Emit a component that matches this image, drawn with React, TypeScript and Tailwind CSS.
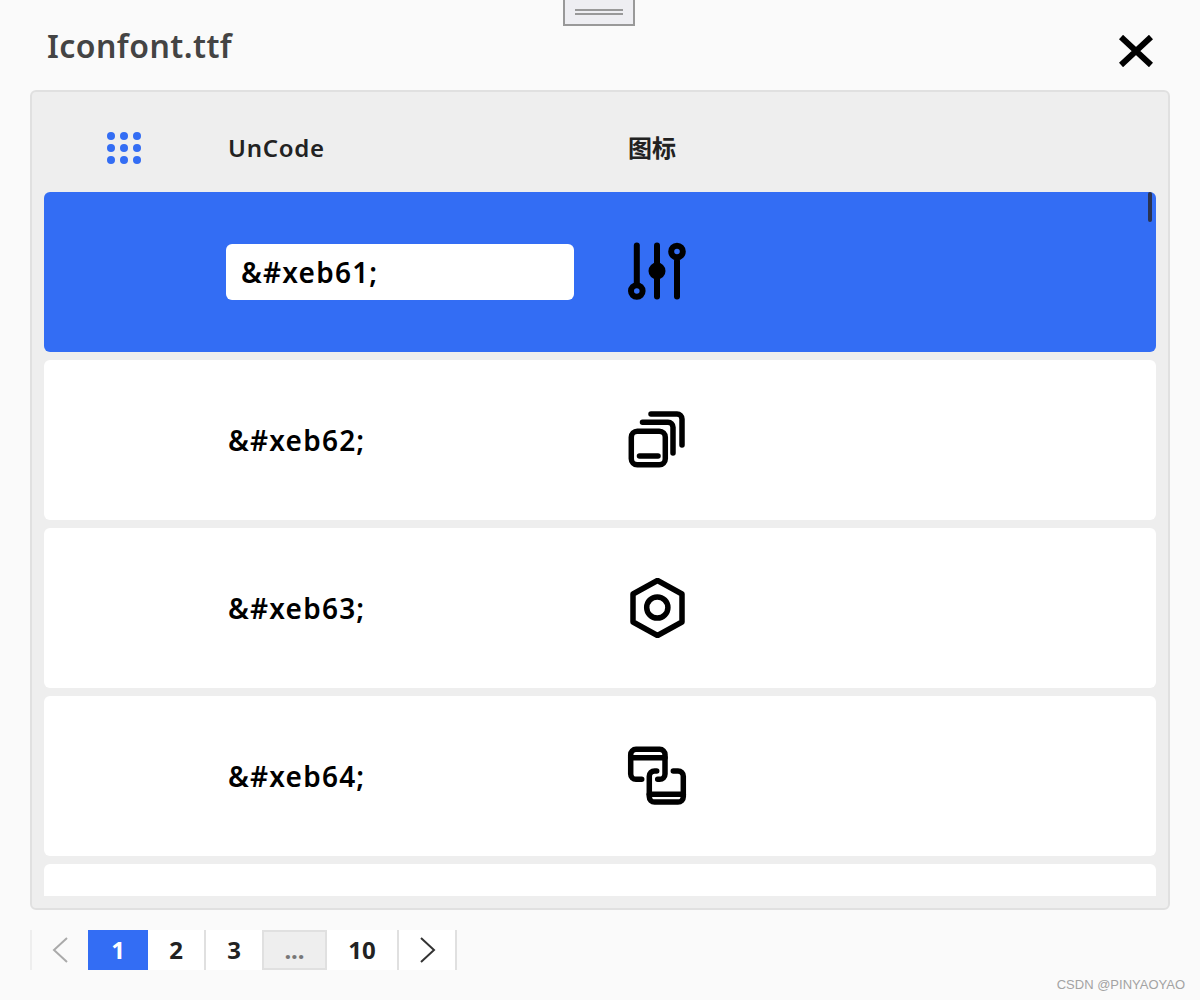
import type { ReactNode } from 'react'

const font = { fontFamily: '"Noto Sans", "Noto Sans CJK SC", sans-serif' }

function IconBox({ children }: { children: ReactNode }) {
  return (
    <svg
      width="60"
      height="60"
      viewBox="0 0 60 60"
      fill="none"
      stroke="#000"
      strokeWidth="5.5"
      strokeLinecap="round"
      strokeLinejoin="round"
    >
      {children}
    </svg>
  )
}

const icons: Record<string, ReactNode> = {
  sliders: (
    <g strokeWidth="6">
      <path d="M9.8 3.5V41" />
      <circle cx="9.8" cy="49" r="5.8" />
      <path d="M30 3.5V54.5" />
      <circle cx="30" cy="29" r="8.5" fill="#000" stroke="none" />
      <path d="M50 19V54.5" />
      <circle cx="50" cy="9.5" r="5.8" />
    </g>
  ),
  layers: (
    <>
      <rect x="4.3" y="21.3" width="34" height="33.4" rx="6" />
      <path d="M12.5 46H31" />
      <path d="M15.5 12.3H41a5 5 0 0 1 5 5V43" />
      <path d="M24 4H50a5 5 0 0 1 5 5V35" />
    </>
  ),
  nut: (
    <>
      <path d="M30.5 2.5L55 16V44L30.5 57.5L6 44V16Z" />
      <circle cx="30.3" cy="29.5" r="10.6" />
    </>
  ),
  link: (
    <>
      <path d="M14.7 33.3H9a5.3 5.3 0 0 1-5.3-5.3V8.6A5.3 5.3 0 0 1 9 3.3H32.7A5.3 5.3 0 0 1 38 8.6V28a5.3 5.3 0 0 1-5.3 5.3H30.7" />
      <path d="M3.7 11.7H38" />
      <path d="M29.7 25H27.6a5.3 5.3 0 0 0-5.3 5.3V50.7a5.3 5.3 0 0 0 5.3 5.3H51a5.3 5.3 0 0 0 5.3-5.3V30.3A5.3 5.3 0 0 0 51 25H46.3" />
      <path d="M22.3 48.3H56.3" />
    </>
  ),
}

const rows = [
  { code: '&#xeb61;', icon: 'sliders', active: true },
  { code: '&#xeb62;', icon: 'layers' },
  { code: '&#xeb63;', icon: 'nut' },
  { code: '&#xeb64;', icon: 'link' },
]

export default function App() {
  return (
    <div className="relative h-[1000px] overflow-hidden bg-[#fafafa]" style={font}>
      {/* drag handle */}
      <div className="absolute left-[563px] top-0 flex h-[26px] w-[72px] flex-col items-center justify-center gap-[2px] border-2 border-t-0 border-[#999] bg-[#eeeef2]">
        <div className="h-[2px] w-[48px] bg-[#999]" />
        <div className="h-[2px] w-[48px] bg-[#999]" />
      </div>

      <div className="flex h-[90px] items-start justify-between pl-[47px] pr-[47px]">
        <h1 className="mt-[24px] text-[32px] leading-[44px] font-semibold tracking-[0.45px] text-[#444]">Iconfont.ttf</h1>
        <svg className="mt-[35px]" width="34" height="32" viewBox="0 0 34 32" stroke="#000" strokeWidth="6">
          <path d="M2 2L32 30M32 2L2 30" />
        </svg>
      </div>

      <div className="relative mx-[30px] h-[820px] rounded-[6px] border-2 border-[#e0e0e0] bg-[#eeeeee] px-[12px]">
        <div className="flex h-[100px] items-center pt-[12px] text-[24px] font-semibold text-[#222]">
          <div className="mr-[24px] flex w-[160px] justify-center">
            <div className="grid grid-cols-3 gap-x-[5px] gap-y-[4px]">
              {Array.from({ length: 9 }).map((_, i) => (
                <span key={i} className="h-[8px] w-[8px] rounded-full bg-[#336df4]" />
              ))}
            </div>
          </div>
          <div className="w-[400px] tracking-[0.7px]">UnCode</div>
          <div>图标</div>
        </div>

        <div className="flex h-[704px] flex-col gap-[8px] overflow-hidden">
          {rows.map((row) => (
            <div
              key={row.code}
              className={`flex h-[160px] shrink-0 items-center rounded-[6px] pl-[184px] text-[28px] font-semibold tracking-[1.2px] text-black ${
                row.active ? 'bg-[#336df4]' : 'bg-white'
              }`}
            >
              <div className="w-[399px] shrink-0">
                {row.active ? (
                  <div className="-ml-[2px] flex h-[56px] w-[348px] items-center rounded-[6px] bg-white pl-[15px]">
                    {row.code}
                  </div>
                ) : (
                  row.code
                )}
              </div>
              <IconBox>{icons[row.icon]}</IconBox>
            </div>
          ))}
          <div className="h-[160px] shrink-0 rounded-[6px] bg-white" />
        </div>

        {/* scrollbar thumb */}
        <div className="absolute right-[16px] top-[100px] h-[30px] w-[4px] rounded-full bg-[#2a3350]" />
      </div>

      <div className="ml-[30px] mt-[20px] flex h-[40px] items-stretch text-[24px] font-bold text-[#222]">
        <div className="flex w-[58px] items-center justify-center border-l-2 border-[#eeeeee] pl-[2px]">
          <svg width="18" height="26" viewBox="0 0 18 26" fill="none" stroke="#aaa" strokeWidth="2">
            <path d="M15 1L2 13L15 25" />
          </svg>
        </div>
        <div className="flex w-[60px] items-center justify-center bg-[#336df4] text-white">1</div>
        <div className="flex w-[58px] items-center justify-center border-r-2 border-[#e0e0e0] bg-white">2</div>
        <div className="flex w-[56px] items-center justify-center bg-white">3</div>
        <div className="flex w-[65px] items-center justify-center border-2 border-[#e0e0e0] bg-[#eeeeee] text-[24px] font-bold text-[#777]">
          ...
        </div>
        <div className="flex w-[72px] items-center justify-center border-r-2 border-[#e0e0e0] bg-white">10</div>
        <div className="flex w-[58px] items-center justify-center border-r-2 border-[#e0e0e0] bg-white">
          <svg width="18" height="26" viewBox="0 0 18 26" fill="none" stroke="#333" strokeWidth="2">
            <path d="M3 1L16 13L3 25" />
          </svg>
        </div>
      </div>

      <div
        className="absolute bottom-[6px] right-[15px] text-[13px] leading-[18px] text-[#a3a3a3]"
        style={{ fontFamily: '"Liberation Sans", sans-serif' }}
      >
        CSDN @PINYAOYAO
      </div>
    </div>
  )
}
